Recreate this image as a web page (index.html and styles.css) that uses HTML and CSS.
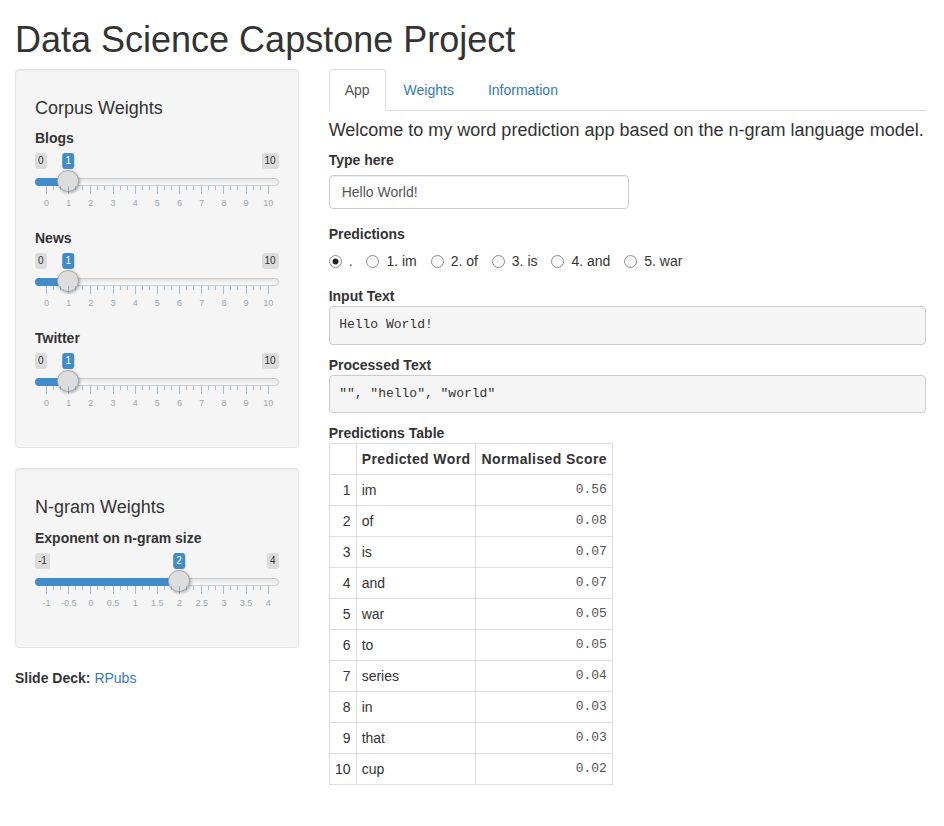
FILE: index.html
```html
<!DOCTYPE html>
<html>
<head>
<meta charset="utf-8">
<title>Data Science Capstone Project</title>
<link rel="stylesheet" href="styles.css">
</head>
<body>
<div class="container">
  <h1 class="title">Data Science Capstone Project</h1>
  <div class="row">
    <div class="sidebar">
      <div class="well">
        <h4>Corpus Weights</h4>
        <div class="form-group">
          <label class="control-label">Blogs</label>
          <div class="irs">
            <span class="irs-min">0</span>
            <span class="irs-max">10</span>
            <span class="irs-line"></span>
            <span class="irs-bar" style="--p:0.1"></span>
            <span class="irs-handle" style="--p:0.1"></span>
            <span class="irs-single" style="--p:0.1">1</span>
            <div class="irs-grid">
              <div class="ticks"><i></i><i></i><i></i><i></i><i></i><i></i><i></i><i></i><i></i><i></i></div>
              <div class="grid-labels"><span>0</span><span>1</span><span>2</span><span>3</span><span>4</span><span>5</span><span>6</span><span>7</span><span>8</span><span>9</span><span>10</span></div>
            </div>
          </div>
        </div>
        <div class="form-group">
          <label class="control-label">News</label>
          <div class="irs">
            <span class="irs-min">0</span>
            <span class="irs-max">10</span>
            <span class="irs-line"></span>
            <span class="irs-bar" style="--p:0.1"></span>
            <span class="irs-handle" style="--p:0.1"></span>
            <span class="irs-single" style="--p:0.1">1</span>
            <div class="irs-grid">
              <div class="ticks"><i></i><i></i><i></i><i></i><i></i><i></i><i></i><i></i><i></i><i></i></div>
              <div class="grid-labels"><span>0</span><span>1</span><span>2</span><span>3</span><span>4</span><span>5</span><span>6</span><span>7</span><span>8</span><span>9</span><span>10</span></div>
            </div>
          </div>
        </div>
        <div class="form-group">
          <label class="control-label">Twitter</label>
          <div class="irs">
            <span class="irs-min">0</span>
            <span class="irs-max">10</span>
            <span class="irs-line"></span>
            <span class="irs-bar" style="--p:0.1"></span>
            <span class="irs-handle" style="--p:0.1"></span>
            <span class="irs-single" style="--p:0.1">1</span>
            <div class="irs-grid">
              <div class="ticks"><i></i><i></i><i></i><i></i><i></i><i></i><i></i><i></i><i></i><i></i></div>
              <div class="grid-labels"><span>0</span><span>1</span><span>2</span><span>3</span><span>4</span><span>5</span><span>6</span><span>7</span><span>8</span><span>9</span><span>10</span></div>
            </div>
          </div>
        </div>
      </div>
      <div class="well">
        <h4>N-gram Weights</h4>
        <div class="form-group">
          <label class="control-label">Exponent on n-gram size</label>
          <div class="irs">
            <span class="irs-min">-1</span>
            <span class="irs-max">4</span>
            <span class="irs-line"></span>
            <span class="irs-bar" style="--p:0.6"></span>
            <span class="irs-handle" style="--p:0.6"></span>
            <span class="irs-single" style="--p:0.6">2</span>
            <div class="irs-grid">
              <div class="ticks"><i></i><i></i><i></i><i></i><i></i><i></i><i></i><i></i><i></i><i></i></div>
              <div class="grid-labels"><span>-1</span><span>-0.5</span><span>0</span><span>0.5</span><span>1</span><span>1.5</span><span>2</span><span>2.5</span><span>3</span><span>3.5</span><span>4</span></div>
            </div>
          </div>
        </div>
      </div>
      <div class="slide-deck"><strong>Slide Deck:</strong> <a href="#">RPubs</a></div>
    </div>
    <div class="main">
      <ul class="nav-tabs">
        <li class="active"><a href="#">App</a></li>
        <li><a href="#">Weights</a></li>
        <li><a href="#">Information</a></li>
      </ul>
      <div class="tab-content">
        <h4 class="welcome">Welcome to my word prediction app based on the n-gram language model.</h4>
        <div class="form-group">
          <label class="control-label">Type here</label>
          <input class="form-control" type="text" value="Hello World!">
        </div>
        <div class="form-group">
          <label class="control-label">Predictions</label>
          <div class="options"><label class="radio-inline"><input type="radio" name="pred" checked><span>.</span></label> <label class="radio-inline"><input type="radio" name="pred"><span>1. im</span></label> <label class="radio-inline"><input type="radio" name="pred"><span>2. of</span></label> <label class="radio-inline"><input type="radio" name="pred"><span>3. is</span></label> <label class="radio-inline"><input type="radio" name="pred"><span>4. and</span></label> <label class="radio-inline"><input type="radio" name="pred"><span>5. war</span></label></div>
        </div>
        <div class="out-label">Input Text</div>
        <pre class="out">Hello World!</pre>
        <div class="out-label">Processed Text</div>
        <pre class="out">"", "hello", "world"</pre>
        <div class="out-label">Predictions Table</div>
        <table class="ptable">
          <thead>
            <tr><th class="n"></th><th class="l">Predicted Word</th><th class="r">Normalised Score</th></tr>
          </thead>
          <tbody>
            <tr><td class="n">1</td><td>im</td><td class="num">0.56</td></tr>
            <tr><td class="n">2</td><td>of</td><td class="num">0.08</td></tr>
            <tr><td class="n">3</td><td>is</td><td class="num">0.07</td></tr>
            <tr><td class="n">4</td><td>and</td><td class="num">0.07</td></tr>
            <tr><td class="n">5</td><td>war</td><td class="num">0.05</td></tr>
            <tr><td class="n">6</td><td>to</td><td class="num">0.05</td></tr>
            <tr><td class="n">7</td><td>series</td><td class="num">0.04</td></tr>
            <tr><td class="n">8</td><td>in</td><td class="num">0.03</td></tr>
            <tr><td class="n">9</td><td>that</td><td class="num">0.03</td></tr>
            <tr><td class="n">10</td><td>cup</td><td class="num">0.02</td></tr>
          </tbody>
        </table>
      </div>
    </div>
  </div>
</div>
</body>
</html>
```
FILE: styles.css
```css
* { box-sizing: border-box; }
html, body { margin: 0; padding: 0; background: #fff; }
body {
  font-family: "Liberation Sans", Arial, Helvetica, sans-serif;
  font-size: 14px;
  line-height: 1.42857143;
  color: #333;
}
a { color: #337ab7; text-decoration: none; }

.container { padding: 0 18px 0 15px; }
.title {
  font-size: 36px;
  font-weight: 500;
  line-height: 1.1;
  margin: 20px 0 9px;
}
.row { display: flex; margin: 0 -15px; }
.sidebar { width: 33.3333%; padding: 0 15px; }
.main { width: 66.6667%; padding: 0 15px; }

.well {
  min-height: 20px;
  padding: 19px;
  margin-bottom: 20px;
  background: #f5f5f5;
  border: 1px solid #e3e3e3;
  border-radius: 4px;
  box-shadow: inset 0 1px 1px rgba(0,0,0,.05);
}
h4 {
  font-size: 18px;
  font-weight: 500;
  line-height: 1.1;
  margin: 10px 0;
}
.form-group { margin-bottom: 15px; }
.control-label {
  display: block;
  font-weight: bold;
  margin-bottom: 5px;
}

/* slider */
.irs { position: relative; height: 60px; }
.irs-min, .irs-max, .irs-single {
  position: absolute;
  top: 0;
  font-size: 10px;
  line-height: 1.333;
  padding: 1px 3px;
  border-radius: 3px;
  white-space: nowrap;
}
.irs-min { left: 0; background: rgba(0,0,0,.1); color: #333; }
.irs-max { right: 0; background: rgba(0,0,0,.1); color: #333; }
.irs-single {
  left: calc((100% - 22px) * var(--p) + 11px);
  transform: translateX(-50%);
  background: #428bca;
  color: #fff;
}
.irs-line {
  position: absolute;
  left: 0; right: 0; top: 25px;
  height: 8px;
  background: linear-gradient(to bottom, #e4e4e4 0%, #fbfbfb 100%);
  border: 1px solid #ccc;
  border-radius: 16px;
}
.irs-bar {
  position: absolute;
  left: 0; top: 25px;
  height: 8px;
  width: calc((100% - 22px) * var(--p) + 11px);
  background: #428bca;
  border-radius: 16px 0 0 16px;
}
.irs-handle {
  position: absolute;
  top: 17px;
  left: calc((100% - 22px) * var(--p));
  width: 22px; height: 22px;
  border: 1px solid #aaa;
  background: #ddd;
  border-radius: 50%;
  box-shadow: 1px 1px 3px rgba(0,0,0,.3);
}
.irs-grid {
  position: absolute;
  left: 11px; right: 11px; top: 33px;
  height: 27px;
}
.ticks { display: flex; height: 8px; position: relative; }
.ticks i {
  flex: 1;
  height: 8px;
  background:
    linear-gradient(rgba(66,139,202,.5), rgba(66,139,202,.5)) left 0 top 0 / 1px 8px no-repeat,
    linear-gradient(rgba(66,139,202,.5), rgba(66,139,202,.5)) left 33.33% top 0 / 1px 4px no-repeat,
    linear-gradient(rgba(66,139,202,.5), rgba(66,139,202,.5)) left 66.67% top 0 / 1px 4px no-repeat;
}
.ticks::after {
  content: "";
  position: absolute;
  left: 100%; top: 0;
  width: 1px; height: 8px;
  background: rgba(66,139,202,.5);
}
.grid-labels {
  position: absolute;
  top: 13px;
  left: -5%;
  width: 110%;
  display: flex;
  font-size: 9px;
  line-height: 9px;
  color: #9ea6ad;
}
.grid-labels span { flex: 1; text-align: center; padding-left: 1px; }

.slide-deck { line-height: 20px; }

/* main */
.nav-tabs {
  list-style: none;
  margin: 0;
  padding: 0;
  display: flex;
  border-bottom: 1px solid #ddd;
}
.nav-tabs li { margin-bottom: -1px; }
.nav-tabs a {
  display: block;
  padding: 10px 15px;
  margin-right: 2px;
  line-height: 20px;
  border: 1px solid transparent;
  border-radius: 4px 4px 0 0;
}
.nav-tabs li.active a {
  color: #555;
  background: #fff;
  border-color: #ddd #ddd transparent;
}
.welcome { margin: 10px 0; }

.form-control {
  display: block;
  width: 300px;
  max-width: 100%;
  height: 34px;
  padding: 6px 12px;
  font-family: inherit;
  font-size: 14px;
  line-height: 1.42857143;
  color: #555;
  background: #fff;
  border: 1px solid #ccc;
  border-radius: 4px;
  box-shadow: inset 0 1px 1px rgba(0,0,0,.075);
  margin: 0;
}

.options { padding-top: 2px; line-height: 20px; }
.radio-inline {
  position: relative;
  display: inline-block;
  padding-left: 20px;
  vertical-align: top;
  font-weight: 400;
}
.radio-inline + .radio-inline { margin-left: 10px; }
.radio-inline input {
  -webkit-appearance: none;
  appearance: none;
  position: absolute;
  left: 0;
  top: 4px;
  margin: 0;
  width: 13px;
  height: 13px;
  border: 1px solid #8d8d8d;
  border-radius: 50%;
  background: linear-gradient(#f3f3f3, #ffffff);
}
.radio-inline input:checked {
  background: radial-gradient(circle at 50% 50%, #222 0, #222 2.6px, #fff 3.4px);
}

.out-label { font-weight: bold; line-height: 20px; }
pre.out {
  display: block;
  margin: 0 0 10px;
  padding: 9px 9.5px;
  font-family: "Liberation Mono", "Courier New", monospace;
  font-size: 13px;
  line-height: 18.5px;
  color: #333;
  background: #f5f5f5;
  border: 1px solid #ccc;
  border-radius: 4px;
  white-space: pre-wrap;
}

.ptable {
  border-collapse: collapse;
  border-spacing: 0;
}
.ptable th, .ptable td {
  border: 1px solid #ddd;
  padding: 5px;
  line-height: 20px;
}
.ptable th { font-weight: bold; vertical-align: bottom; letter-spacing: 0.4px; }
.ptable th.n { min-width: 27px; }
.ptable th.l { text-align: left; }
.ptable th.r { text-align: right; }
.ptable td.n { text-align: right; }
.ptable td.num {
  text-align: right;
  font-family: "Liberation Mono", "Courier New", monospace;
  font-size: 13px;
  color: #555;
}
```
